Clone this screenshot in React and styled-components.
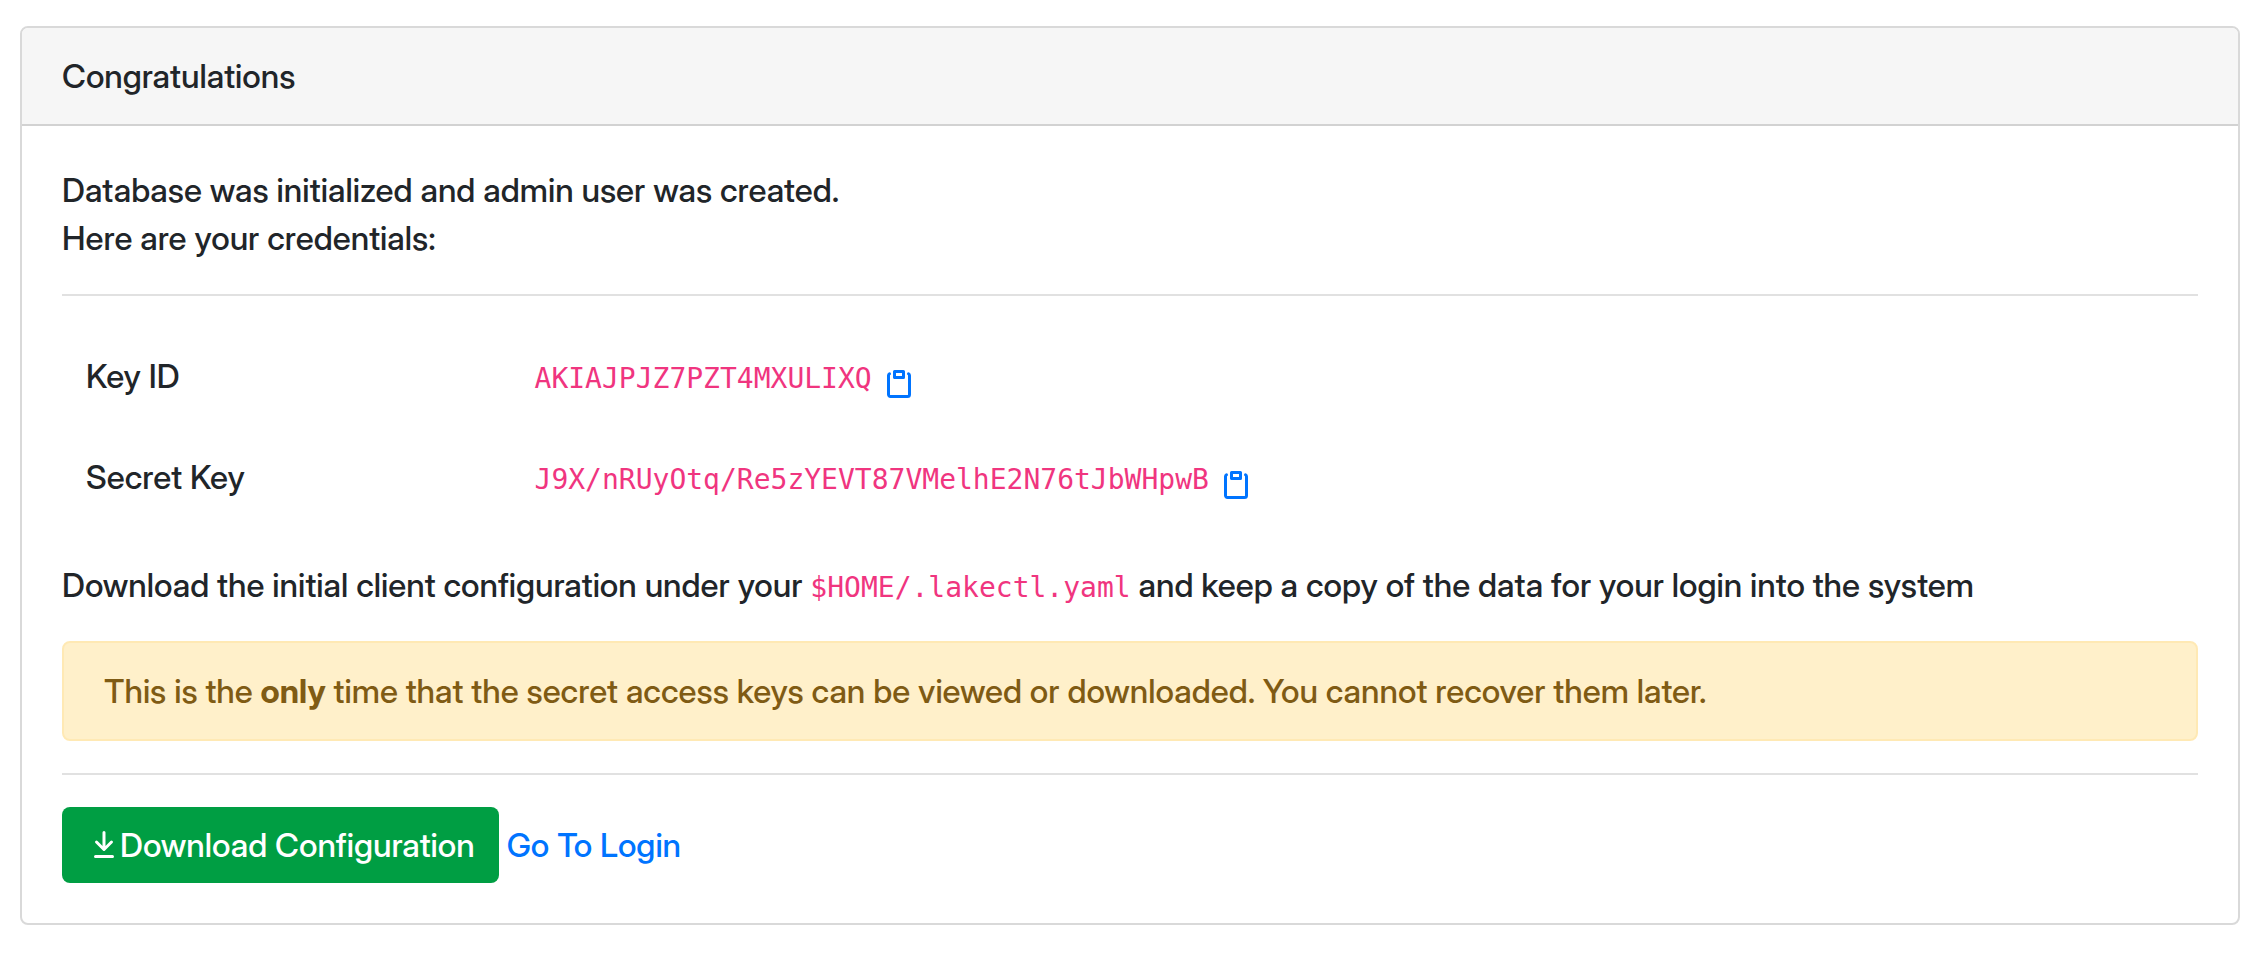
import React from "react";
import styled, { createGlobalStyle } from "styled-components";

const GlobalStyle = createGlobalStyle`
  *, *::before, *::after { box-sizing: border-box; }
  body {
    margin: 0;
    background: #fff;
    color: #212529;
    font-family: "Inter Display", Inter, "Liberation Sans", sans-serif;
    font-size: 33px;
    font-weight: 500;
    line-height: 48px;
  }
`;

const Page = styled.main`
  padding: 26px 26px 30px 20px;
`;

const Card = styled.section`
  border: 2px solid #d9d9d9;
  border-radius: 8px;
  background: #fff;
  overflow: hidden;
`;

const CardHeader = styled.header`
  padding: 24px 40px;
  background: #f6f6f6;
  border-bottom: 2px solid #d2d2d2;
`;

const CardBody = styled.div`
  padding: 40px;
`;

const Text = styled.p`
  margin: 0;
`;

const Divider = styled.hr`
  height: 2px;
  margin: 32px 0;
  border: 0;
  background: #e1e1e1;
`;

const Credentials = styled.table`
  width: 100%;
  margin-bottom: 31px;
  border-collapse: collapse;
  table-layout: fixed;
`;

const LabelCell = styled.th`
  width: 21%;
  height: 101px;
  padding: 24px;
  font-weight: 500;
  text-align: left;
  vertical-align: baseline;
`;

const ValueCell = styled.td`
  padding: 24px;
  vertical-align: baseline;
`;

const Value = styled.div`
  display: flex;
  align-items: baseline;
  gap: 11px;
`;

const Code = styled.code`
  color: #f0357f;
  font-family: "DejaVu Sans Mono", "Liberation Mono", monospace;
  font-size: 28px;
  font-weight: 400;
  line-height: 32px;
`;

const CopyButton = styled.button`
  display: flex;
  align-self: flex-end;
  margin-bottom: -5px;
  padding: 0;
  border: 0;
  background: none;
  color: #0074ff;
  cursor: pointer;
`;

const Icon = styled.svg`
  width: 32px;
  height: 32px;
  fill: currentColor;
`;

const Alert = styled.div`
  margin: 32px 0;
  padding: 24px 40px;
  border: 2px solid #ffe9b4;
  border-radius: 8px;
  background: #fff0ca;
  color: #7f5b14;
`;

const Actions = styled.div`
  display: flex;
  align-items: center;
  gap: 8px;
`;

const DownloadButton = styled.button`
  display: flex;
  align-items: center;
  padding: 14px 24px 14px 26px;
  border: 0;
  border-radius: 8px;
  background: #009e43;
  color: #fff;
  font: inherit;
  cursor: pointer;
`;

const LoginLink = styled.a`
  color: #0074ff;
  text-decoration: none;
`;

const ClipboardIcon = () => (
  <Icon viewBox="0 0 16 16" aria-hidden="true">
    <path
      fillRule="evenodd"
      d="M5.75 1a.75.75 0 00-.75.75v3c0 .414.336.75.75.75h4.5a.75.75 0 00.75-.75v-3a.75.75 0 00-.75-.75h-4.5zm.75 3V2.5h3V4h-3zm-2.874-.467a.75.75 0 00-.752-1.298A1.75 1.75 0 002 3.75v9.5c0 .966.784 1.75 1.75 1.75h8.5A1.75 1.75 0 0014 13.25v-9.5a1.75 1.75 0 00-.874-1.515.75.75 0 10-.752 1.298.25.25 0 01.126.217v9.5a.25.25 0 01-.25.25h-8.5a.25.25 0 01-.25-.25v-9.5a.25.25 0 01.126-.217z"
    />
  </Icon>
);

const DownloadIcon = () => (
  <Icon viewBox="0 0 16 16" aria-hidden="true">
    <path
      fillRule="evenodd"
      d="M7.47 10.78a.75.75 0 001.06 0l3.75-3.75a.75.75 0 00-1.06-1.06L8.75 8.44V1.75a.75.75 0 00-1.5 0v6.69L4.78 5.97a.75.75 0 00-1.06 1.06l3.75 3.75zM3.75 13a.75.75 0 000 1.5h8.5a.75.75 0 000-1.5h-8.5z"
    />
  </Icon>
);

const credentials = [
  { label: "Key ID", value: "AKIAJPJZ7PZT4MXULIXQ" },
  { label: "Secret Key", value: "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" },
];

const CredentialRow = ({ label, value }) => (
  <tr>
    <LabelCell scope="row">{label}</LabelCell>
    <ValueCell>
      <Value>
        <Code>{value}</Code>
        <CopyButton
          type="button"
          aria-label={`Copy ${label}`}
          onClick={() => navigator.clipboard?.writeText(value)}
        >
          <ClipboardIcon />
        </CopyButton>
      </Value>
    </ValueCell>
  </tr>
);

export default function App() {
  return (
    <>
      <GlobalStyle />
      <Page>
        <Card>
          <CardHeader>Congratulations</CardHeader>
          <CardBody>
            <Text>
              Database was initialized and admin user was created.
              <br />
              Here are your credentials:
            </Text>
            <Divider />
            <Credentials>
              <tbody>
                {credentials.map((item) => (
                  <CredentialRow key={item.label} {...item} />
                ))}
              </tbody>
            </Credentials>
            <Text>
              Download the initial client configuration under your <Code>$HOME/.lakectl.yaml</Code>{" "}
              and keep a copy of the data for your login into the system
            </Text>
            <Alert role="alert">
              This is the <strong>only</strong> time that the secret access keys can be viewed or
              downloaded. You cannot recover them later.
            </Alert>
            <Divider />
            <Actions>
              <DownloadButton type="button">
                <DownloadIcon />
                Download Configuration
              </DownloadButton>
              <LoginLink href="#login">Go To Login</LoginLink>
            </Actions>
          </CardBody>
        </Card>
      </Page>
    </>
  );
}
